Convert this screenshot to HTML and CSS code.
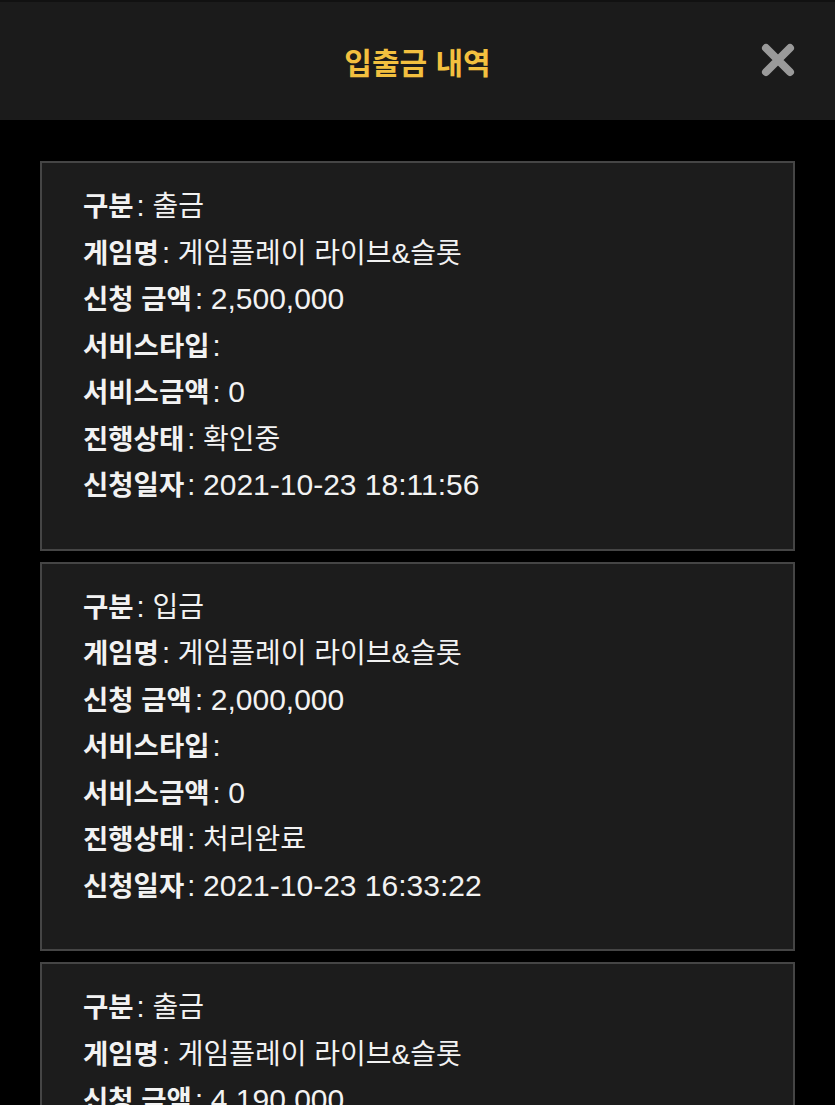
FILE: index.html
```html
<!DOCTYPE html>
<html lang="ko">
<head>
<meta charset="utf-8">
<title>입출금 내역</title>
<link rel="stylesheet" href="styles.css">
</head>
<body>
<header class="topbar">
  <h1 class="title">입출금 내역</h1>
  <button class="close" aria-label="닫기">
    <svg width="34" height="34" viewBox="0 0 34 34"><path d="M5 5 L29 29 M29 5 L5 29" stroke="#9a9a9a" stroke-width="8" stroke-linecap="round"/></svg>
  </button>
</header>
<main class="list">
  <section class="card">
    <p class="row"><b>구분</b><i>:</i> 출금</p>
    <p class="row"><b>게임명</b><i>:</i> 게임플레이 라이브&amp;슬롯</p>
    <p class="row"><b>신청 금액</b><i>:</i> <span class="num">2,500,000</span></p>
    <p class="row"><b>서비스타입</b><i>:</i></p>
    <p class="row"><b>서비스금액</b><i>:</i> <span class="num">0</span></p>
    <p class="row"><b>진행상태</b><i>:</i> 확인중</p>
    <p class="row"><b>신청일자</b><i>:</i> <span class="num">2021-10-23 18:11:56</span></p>
  </section>
  <section class="card">
    <p class="row"><b>구분</b><i>:</i> 입금</p>
    <p class="row"><b>게임명</b><i>:</i> 게임플레이 라이브&amp;슬롯</p>
    <p class="row"><b>신청 금액</b><i>:</i> <span class="num">2,000,000</span></p>
    <p class="row"><b>서비스타입</b><i>:</i></p>
    <p class="row"><b>서비스금액</b><i>:</i> <span class="num">0</span></p>
    <p class="row"><b>진행상태</b><i>:</i> 처리완료</p>
    <p class="row"><b>신청일자</b><i>:</i> <span class="num">2021-10-23 16:33:22</span></p>
  </section>
  <section class="card">
    <p class="row"><b>구분</b><i>:</i> 출금</p>
    <p class="row"><b>게임명</b><i>:</i> 게임플레이 라이브&amp;슬롯</p>
    <p class="row"><b>신청 금액</b><i>:</i> <span class="num">4,190,000</span></p>
    <p class="row"><b>서비스타입</b><i>:</i></p>
    <p class="row"><b>서비스금액</b><i>:</i> <span class="num">0</span></p>
    <p class="row"><b>진행상태</b><i>:</i> 처리완료</p>
    <p class="row"><b>신청일자</b><i>:</i> <span class="num">2021-10-23 15:02:10</span></p>
  </section>
</main>
</body>
</html>
```
FILE: styles.css
```css
html, body {
  margin: 0;
  padding: 0;
  background: #000;
}
body {
  font-family: "Noto Sans CJK KR", "Noto Sans", sans-serif;
  color: #f2f2f2;
}
.topbar {
  position: relative;
  height: 120px;
  background: #1b1b1b;
  border-top: 2px solid #111;
  box-sizing: border-box;
  display: flex;
  align-items: center;
  justify-content: center;
}
.title {
  margin: 0;
  font-size: 30px;
  font-weight: 700;
  color: #f3c03f;
}
.close {
  position: absolute;
  right: 40px;
  top: 41px;
  width: 34px;
  height: 34px;
  padding: 0;
  border: 0;
  background: none;
  display: block;
}
.close svg { display: block; }
.list {
  padding: 41px 40px 0 40px;
  display: flex;
  flex-direction: column;
  gap: 11px;
}
.card {
  background: #1c1c1c;
  border: 2px solid #454545;
  padding: 21px 40px 39px 41px;
}
.row {
  margin: 0;
  font-family: "Liberation Sans", "Noto Sans CJK KR", sans-serif;
  font-size: 28px;
  line-height: 46.5px;
  height: 46.5px;
  white-space: nowrap;
  font-weight: 400;
}
.row b,
.row i,
.row .num {
  line-height: 1;
}
.row b {
  font-family: "Noto Sans CJK KR", sans-serif;
  font-weight: 700;
  font-size: 27.5px;
}
.row i {
  font-style: normal;
  font-weight: 400;
  font-size: 29px;
  margin-left: 3px;
}
.row .num {
  font-size: 30px;
}
```
